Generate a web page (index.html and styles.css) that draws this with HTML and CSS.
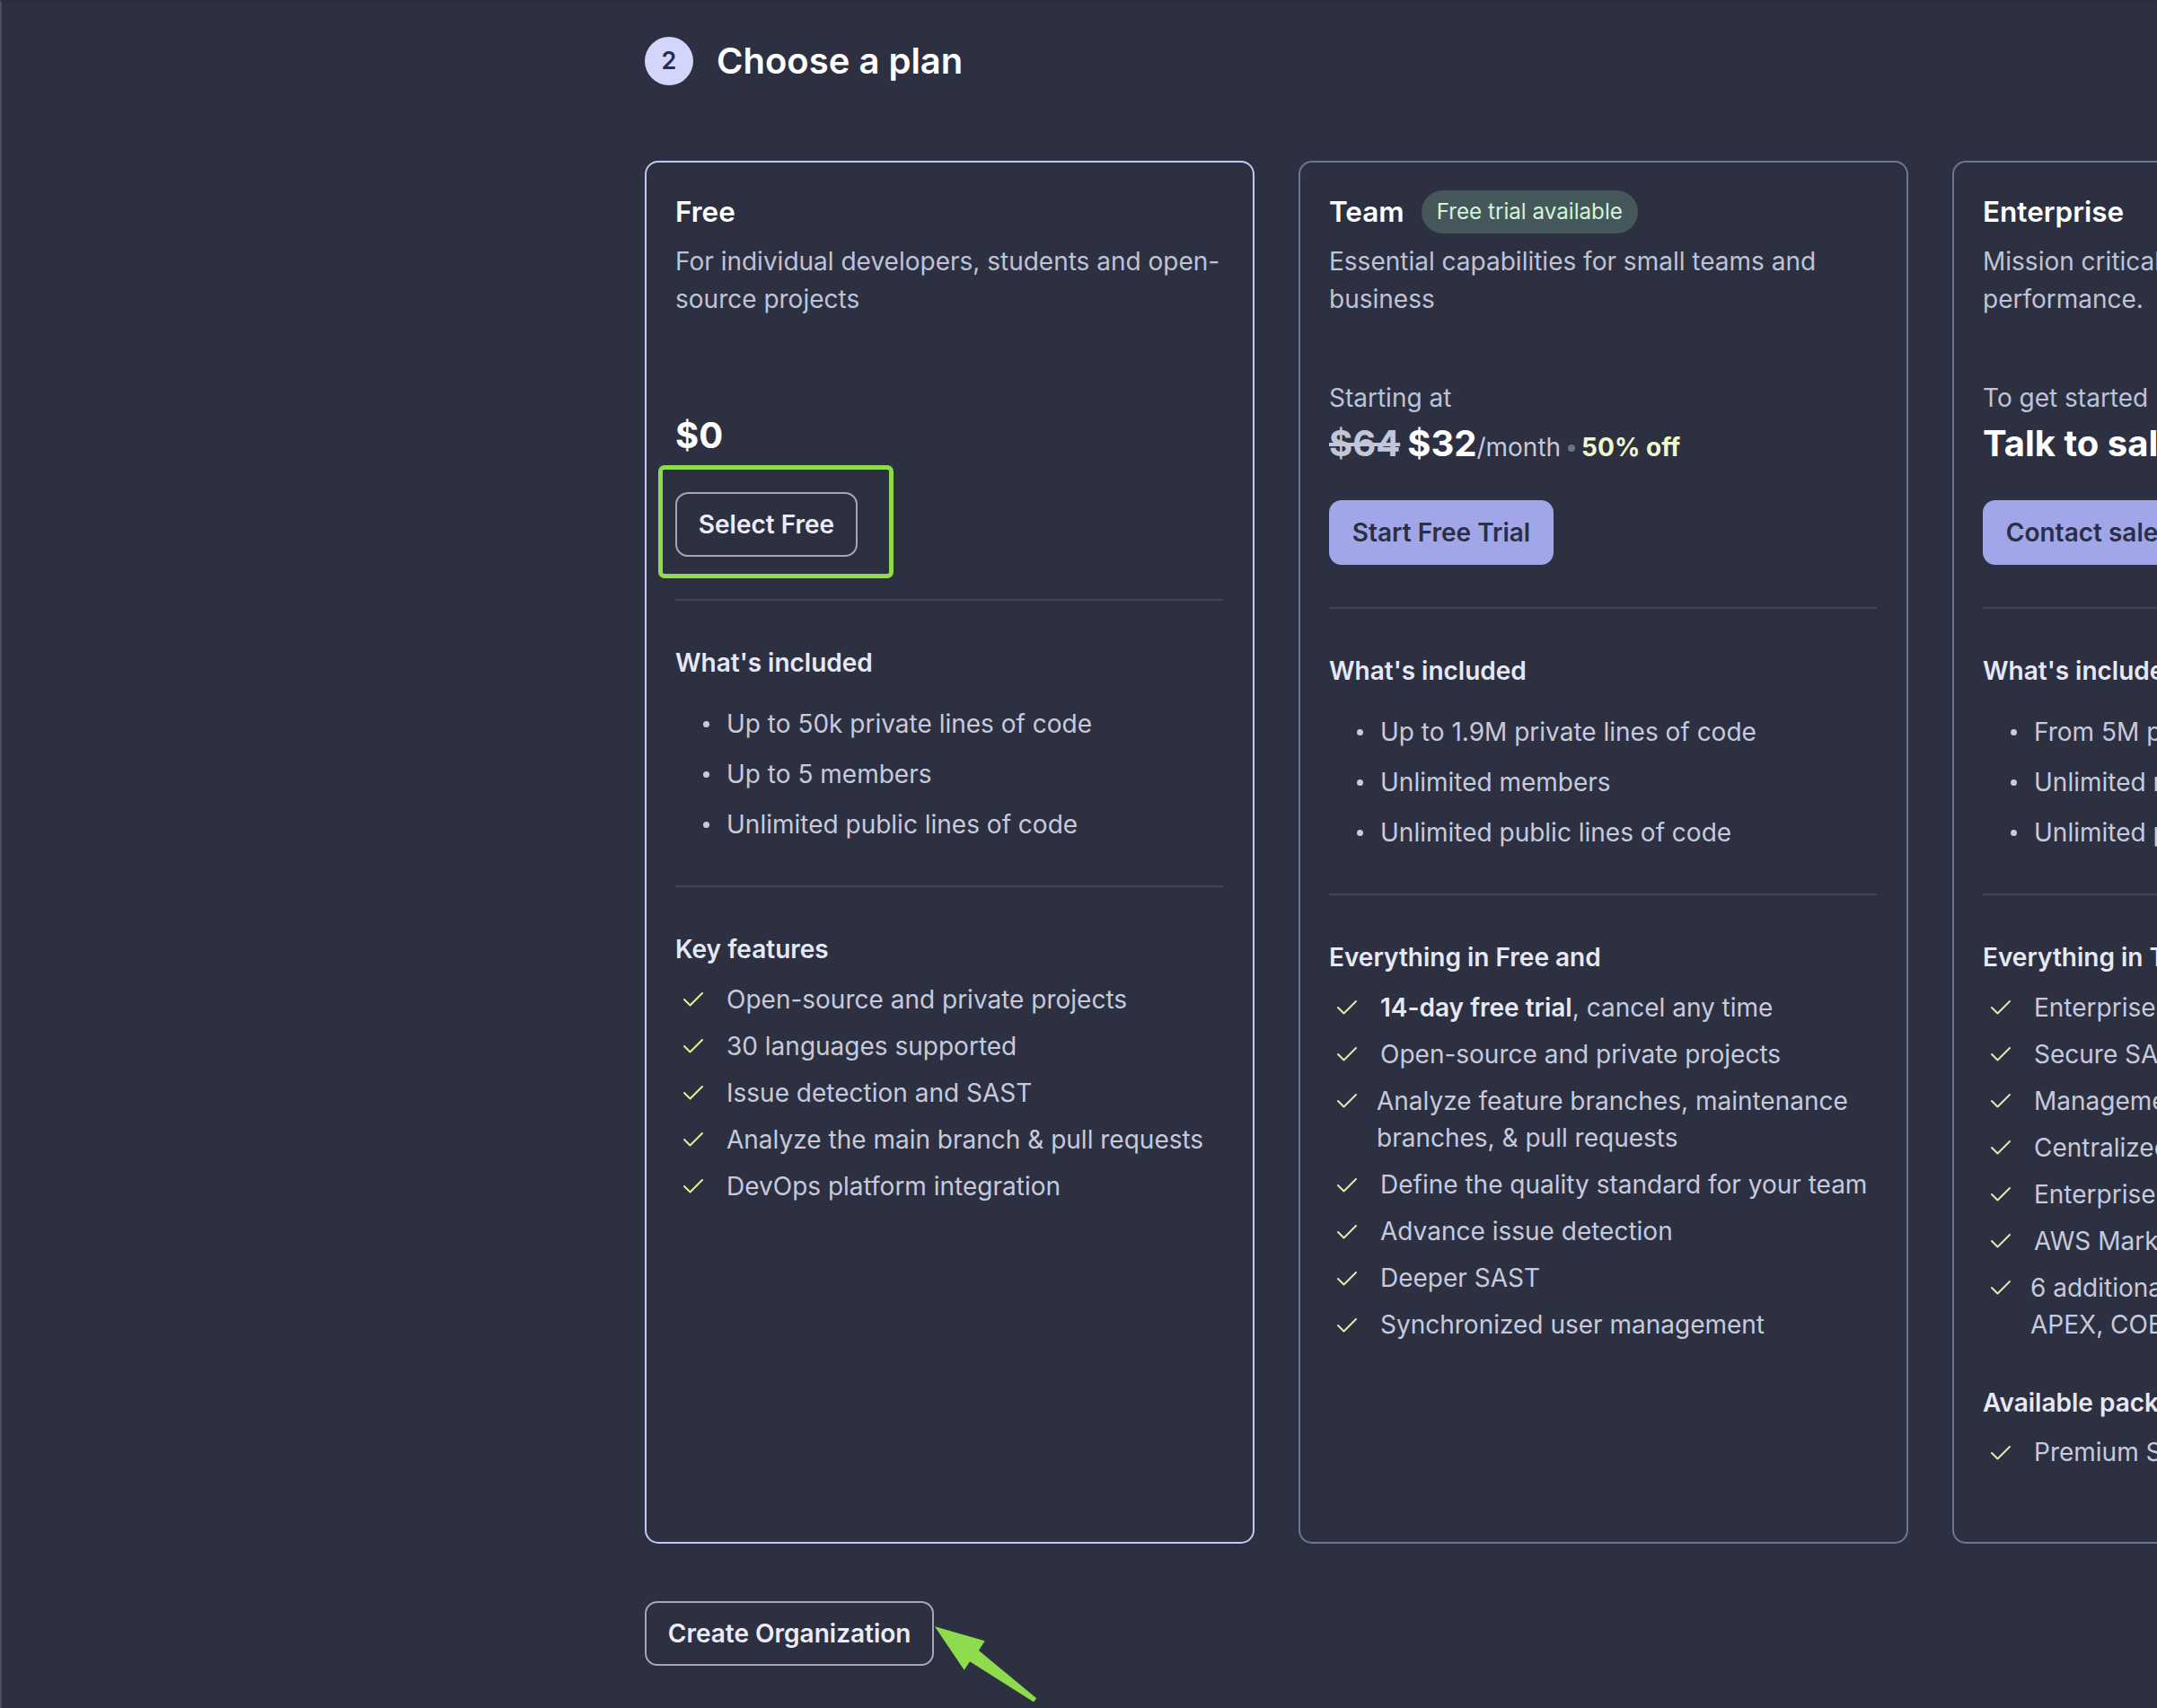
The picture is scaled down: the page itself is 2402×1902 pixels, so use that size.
FILE: index.html
```html
<!DOCTYPE html>
<html lang="en">
<head>
<meta charset="utf-8">
<title>Choose a plan</title>
<link rel="stylesheet" href="styles.css">
</head>
<body>
<div class="page">
  <div class="step-header">
    <span class="step-num">2</span>
    <h2 class="step-title">Choose a plan</h2>
  </div>

  <div class="plans">
    <!-- Free -->
    <section class="plan plan-selected">
      <div class="plan-head">
        <h3 class="plan-name">Free</h3>
      </div>
      <p class="plan-desc">For individual developers, students and open-source projects</p>
      <div class="price-block price-block-free">
        <div class="price-line"><span class="price-now">$0</span></div>
      </div>
      <div class="cta">
        <span class="highlight"><button class="btn btn-outline">Select Free</button></span>
      </div>
      <div class="divider"></div>
      <h4 class="section-title">What's included</h4>
      <ul class="bullets">
        <li>Up to 50k private lines of code</li>
        <li>Up to 5 members</li>
        <li>Unlimited public lines of code</li>
      </ul>
      <div class="divider"></div>
      <h4 class="section-title">Key features</h4>
      <ul class="checks">
        <li><svg class="check" viewBox="0 0 22 16"><path d="M1 8 L7.5 14.5 L21 1"/></svg><span>Open-source and private projects</span></li>
        <li><svg class="check" viewBox="0 0 22 16"><path d="M1 8 L7.5 14.5 L21 1"/></svg><span>30 languages supported</span></li>
        <li><svg class="check" viewBox="0 0 22 16"><path d="M1 8 L7.5 14.5 L21 1"/></svg><span>Issue detection and SAST</span></li>
        <li><svg class="check" viewBox="0 0 22 16"><path d="M1 8 L7.5 14.5 L21 1"/></svg><span>Analyze the main branch &amp; pull requests</span></li>
        <li><svg class="check" viewBox="0 0 22 16"><path d="M1 8 L7.5 14.5 L21 1"/></svg><span>DevOps platform integration</span></li>
      </ul>
    </section>

    <!-- Team -->
    <section class="plan">
      <div class="plan-head">
        <h3 class="plan-name">Team</h3>
        <span class="badge">Free trial available</span>
      </div>
      <p class="plan-desc">Essential capabilities for small teams and business</p>
      <div class="price-block">
        <div class="price-label">Starting at</div>
        <div class="price-line"><span class="price-old">$64</span><span class="price-now">$32</span><span class="price-unit">/month</span><span class="price-dot"></span><span class="price-off">50% off</span></div>
      </div>
      <div class="cta">
        <button class="btn btn-primary">Start Free Trial</button>
      </div>
      <div class="divider"></div>
      <h4 class="section-title">What's included</h4>
      <ul class="bullets">
        <li>Up to 1.9M private lines of code</li>
        <li>Unlimited members</li>
        <li>Unlimited public lines of code</li>
      </ul>
      <div class="divider"></div>
      <h4 class="section-title">Everything in Free and</h4>
      <ul class="checks">
        <li><svg class="check" viewBox="0 0 22 16"><path d="M1 8 L7.5 14.5 L21 1"/></svg><span><b>14-day free trial</b>, cancel any time</span></li>
        <li><svg class="check" viewBox="0 0 22 16"><path d="M1 8 L7.5 14.5 L21 1"/></svg><span>Open-source and private projects</span></li>
        <li class="multi"><svg class="check" viewBox="0 0 22 16"><path d="M1 8 L7.5 14.5 L21 1"/></svg><span>Analyze feature branches, maintenance branches, &amp; pull requests</span></li>
        <li><svg class="check" viewBox="0 0 22 16"><path d="M1 8 L7.5 14.5 L21 1"/></svg><span>Define the quality standard for your team</span></li>
        <li><svg class="check" viewBox="0 0 22 16"><path d="M1 8 L7.5 14.5 L21 1"/></svg><span>Advance issue detection</span></li>
        <li><svg class="check" viewBox="0 0 22 16"><path d="M1 8 L7.5 14.5 L21 1"/></svg><span>Deeper SAST</span></li>
        <li><svg class="check" viewBox="0 0 22 16"><path d="M1 8 L7.5 14.5 L21 1"/></svg><span>Synchronized user management</span></li>
      </ul>
    </section>

    <!-- Enterprise -->
    <section class="plan">
      <div class="plan-head">
        <h3 class="plan-name">Enterprise</h3>
      </div>
      <p class="plan-desc">Mission critical capabilities for scale and performance.</p>
      <div class="price-block">
        <div class="price-label">To get started</div>
        <div class="price-line"><span class="price-now">Talk to sales</span></div>
      </div>
      <div class="cta">
        <button class="btn btn-primary">Contact sales</button>
      </div>
      <div class="divider"></div>
      <h4 class="section-title">What's included</h4>
      <ul class="bullets">
        <li>From 5M private lines of code</li>
        <li>Unlimited members</li>
        <li>Unlimited public lines of code</li>
      </ul>
      <div class="divider"></div>
      <h4 class="section-title">Everything in Team and</h4>
      <ul class="checks">
        <li><svg class="check" viewBox="0 0 22 16"><path d="M1 8 L7.5 14.5 L21 1"/></svg><span>Enterprise-grade reporting</span></li>
        <li><svg class="check" viewBox="0 0 22 16"><path d="M1 8 L7.5 14.5 L21 1"/></svg><span>Secure SAML single sign-on</span></li>
        <li><svg class="check" viewBox="0 0 22 16"><path d="M1 8 L7.5 14.5 L21 1"/></svg><span>Management of multiple organizations</span></li>
        <li><svg class="check" viewBox="0 0 22 16"><path d="M1 8 L7.5 14.5 L21 1"/></svg><span>Centralized billing</span></li>
        <li><svg class="check" viewBox="0 0 22 16"><path d="M1 8 L7.5 14.5 L21 1"/></svg><span>Enterprise-grade security</span></li>
        <li><svg class="check" viewBox="0 0 22 16"><path d="M1 8 L7.5 14.5 L21 1"/></svg><span>AWS Marketplace billing</span></li>
        <li class="multi"><svg class="check" viewBox="0 0 22 16"><path d="M1 8 L7.5 14.5 L21 1"/></svg><span>6 additional languages supported:<br>APEX, COBOL, PL/I, RPG, ABAP, T-SQL</span></li>
      </ul>
      <h4 class="section-title section-title-spaced">Available packs</h4>
      <ul class="checks">
        <li><svg class="check" viewBox="0 0 22 16"><path d="M1 8 L7.5 14.5 L21 1"/></svg><span>Premium Support</span></li>
      </ul>
    </section>
  </div>

  <div class="create-row">
    <button class="btn btn-outline">Create Organization</button>
    <svg class="arrow" viewBox="0 0 125 100" width="125" height="100">
      <polygon points="5,9.3 60.7,25.3 54,36 118.3,89.3 115,93.3 44,48.3 37.7,57.7"/>
    </svg>
  </div>
</div>
</body>
</html>
```

FILE: styles.css
```css
*,
*::before,
*::after {
  box-sizing: border-box;
}

html,
body {
  margin: 0;
  height: 100%;
  overflow: hidden;
}

body {
  background: #2d3041;
  font-family: Inter, "Noto Sans", "Liberation Sans", sans-serif;
  font-size: 28px;
  line-height: 41.5px;
  color: #c6cadd;
}

.page {
  min-height: 100%;
  border-left: 2px solid #4b4f61;
  border-top: 3px solid #292c3c;
  padding: 38px 0 0 716px;
}

/* step header */
.step-header {
  display: flex;
  align-items: center;
  gap: 26px;
  height: 54px;
}

.step-num {
  width: 54px;
  height: 54px;
  border-radius: 50%;
  background: #d3d6fa;
  color: #272b57;
  font-weight: 600;
  font-size: 27px;
  display: flex;
  align-items: center;
  justify-content: center;
}

.step-title {
  margin: 0;
  font-size: 40px;
  line-height: 54px;
  font-weight: 600;
  color: #ffffff;
}

/* plans */
.plans {
  display: flex;
  gap: 49px;
  margin-top: 84px;
}

.plan {
  flex: 0 0 679px;
  border: 2px solid #6f7692;
  border-radius: 15px;
  padding: 31px 33px 78px 32px;
}

.plan-selected {
  border-color: #c3c6f6;
}

.plan-head {
  display: flex;
  align-items: center;
  gap: 19px;
  height: 48px;
}

.plan-name {
  margin: 0;
  font-size: 31.5px;
  line-height: 46px;
  font-weight: 600;
  color: #ffffff;
}

.badge {
  height: 48px;
  padding: 0 17px;
  border-radius: 24px;
  background: #46575b;
  color: #d2f4d6;
  font-size: 24.2px;
  line-height: 48px;
}

.plan-desc {
  margin: 11px 0 0;
  min-height: 83px;
  color: #bfc3d7;
}

.price-block {
  margin-top: 69px;
}

.price-block-free {
  margin-top: 106px;
}

.price-label {
  color: #bfc3d7;
}

.price-line {
  margin-top: 4.5px;
  height: 49px;
  font-size: 40px;
  line-height: 49px;
  white-space: nowrap;
}

.price-old {
  font-weight: 700;
  color: #c2c6d8;
  text-decoration: line-through;
  margin-right: 8px;
}

.price-now {
  font-weight: 700;
  color: #ffffff;
}

.price-unit {
  font-size: 28px;
  line-height: 1;
  color: #c5c9dd;
}

.price-dot {
  display: inline-block;
  width: 8px;
  height: 8px;
  border-radius: 50%;
  background: #6d7287;
  margin: 0 7px 0 8px;
  vertical-align: baseline;
  position: relative;
  top: -5px;
}

.price-off {
  font-size: 28px;
  line-height: 1;
  font-weight: 700;
  color: #f1f7cb;
}

.cta {
  display: flex;
  margin-top: 38.5px;
}

.btn {
  font-family: inherit;
  font-size: 28px;
  line-height: 40px;
  font-weight: 600;
  padding: 14px 23.8px;
  border-radius: 14px;
  border: 2px solid;
  cursor: pointer;
}

.btn-outline {
  background: transparent;
  border-color: #a3a7bb;
  color: #ebecf7;
}

.btn-primary {
  background: #a0a6e7;
  border-color: #a0a6e7;
  color: #2a2e47;
}

.highlight {
  position: relative;
  display: inline-flex;
}

.highlight::after {
  content: "";
  position: absolute;
  left: -19px;
  top: -30px;
  width: 262px;
  height: 126px;
  border: 5px solid #8edc4e;
  border-radius: 7px;
}

.divider {
  height: 2px;
  background: #41465a;
  margin: 47px 0 49px;
}

.section-title {
  margin: 0;
  font-size: 28px;
  line-height: 41.5px;
  font-weight: 600;
  color: #e6e8f3;
}

.section-title-spaced {
  margin-top: 45px;
}

.bullets {
  list-style: none;
  margin: 26.5px 0 0;
  padding: 0;
  display: flex;
  flex-direction: column;
  gap: 14.5px;
}

.bullets li {
  display: flex;
  align-items: center;
  white-space: nowrap;
}

.bullets li::before {
  content: "";
  flex: none;
  width: 7px;
  height: 7px;
  border-radius: 50%;
  background: #c6cadd;
  margin: 0 19px 0 31px;
}

.checks {
  list-style: none;
  margin: 14px 0 0;
  padding: 0;
  display: flex;
  flex-direction: column;
  gap: 10.5px;
}

.checks li {
  display: flex;
  align-items: flex-start;
  gap: 26px;
  padding-left: 9px;
}

.checks li.multi {
  gap: 22px;
}

.checks li span {
  white-space: nowrap;
}

.checks li.multi span {
  white-space: normal;
}

.checks b {
  font-weight: 600;
  color: #e6e8f3;
}

.check {
  flex: none;
  width: 22px;
  height: 16px;
  margin-top: 12.75px;
  fill: none;
  stroke: #dcef9e;
  stroke-width: 2;
  stroke-linecap: round;
  stroke-linejoin: round;
}

/* create */
.create-row {
  position: relative;
  display: flex;
  margin-top: 64px;
}

.arrow {
  position: absolute;
  left: 318px;
  top: 19px;
  fill: #8edc4e;
}
```
